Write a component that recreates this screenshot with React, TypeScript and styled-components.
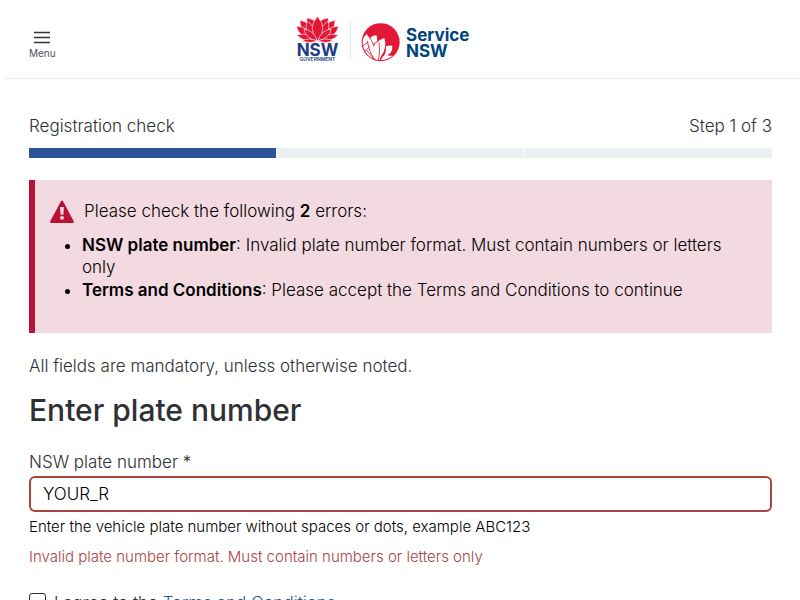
import React, { useState } from "react";
import styled, { createGlobalStyle } from "styled-components";

const GlobalStyle = createGlobalStyle`
  *, *::before, *::after { box-sizing: border-box; }
  html { scrollbar-width: none; }
  body {
    margin: 0;
    background: #fff;
    color: #2e3133;
    font-family: Inter, "Liberation Sans", sans-serif;
    font-size: 17px;
    font-weight: 300;
    line-height: 22px;
  }
`;

const Page = styled.div`
  min-height: 100vh;
`;

const Header = styled.header`
  display: grid;
  grid-template-columns: 1fr auto 1fr;
  align-items: start;
  height: 79px;
  margin-left: 5px;
  padding: 0 64px 0 24px;
  border-bottom: 1px solid #e4e9ec;
`;

const MenuButton = styled.button`
  display: flex;
  flex-direction: column;
  align-items: center;
  justify-self: start;
  gap: 3px;
  margin-top: 31px;
  padding: 0;
  border: 0;
  background: none;
  color: #4f4f5c;
  font: 400 10px/12px Inter, "Liberation Sans", sans-serif;
  cursor: pointer;
`;

const LogoLink = styled.a`
  display: block;
  margin-top: 14px;
`;

const Main = styled.main`
  padding: 36px 28px 24px 29px;
`;

const StepRow = styled.div`
  display: flex;
  justify-content: space-between;
`;

const Progress = styled.div`
  display: grid;
  grid-template-columns: repeat(3, 1fr);
  gap: 1px;
  margin-top: 11px;
`;

const Segment = styled.div<{ $done?: boolean }>`
  height: 10px;
  background: ${(p) => (p.$done ? "#2e5299" : "#ebf0f3")};
`;

const Alert = styled.section`
  display: flex;
  flex-direction: column;
  gap: 10px;
  margin-top: 22px;
  padding: 20px 16px 31px 15px;
  border-left: 6px solid #b81237;
  background: #f3dae0;
  color: #000;
`;

const AlertTitle = styled.div`
  display: flex;
  gap: 10px;
  line-height: 22px;
`;

const ErrorList = styled.ul`
  margin: 0;
  padding-left: 32px;
`;

const ErrorItem = styled.li`
  margin-bottom: 1px;
`;

const Strong = styled.strong`
  font-weight: 600;
`;

const Note = styled.p`
  margin: 22px 0 0;
`;

const Heading = styled.h1`
  margin: 15px 0 0;
  font-size: 30px;
  font-weight: 500;
  line-height: 36px;
`;

const Field = styled.div`
  display: flex;
  flex-direction: column;
  margin-top: 23px;
`;

const Label = styled.label`
  line-height: 22px;
`;

const TextInput = styled.input`
  width: 100%;
  height: 36px;
  margin-top: 3px;
  padding: 0 12px;
  border: 2px solid #a94442;
  border-radius: 6px;
  outline: 0;
  background: #fff;
  color: #000;
  font: 300 17px/22px Inter, "Liberation Sans", sans-serif;
`;

const Help = styled.p<{ $error?: boolean }>`
  margin: ${(p) => (p.$error ? "10px" : "5px")} 0 0;
  color: ${(p) => (p.$error ? "#a94442" : "#000")};
  font-size: 15px;
  line-height: 20px;
`;

const Agree = styled.div`
  display: flex;
  gap: 8px;
  margin-top: 25px;
`;

const Check = styled.input`
  appearance: none;
  flex: none;
  width: 17px;
  height: 17px;
  margin: 1px 0 0;
  border: 1px solid #2e3133;
  border-radius: 3px;
  background: #fff;
  &:checked { background: #2e5299; }
`;

const TermsLink = styled.a`
  color: #2e5299;
  text-decoration: none;
`;

function MenuIcon() {
  return (
    <svg width="16" height="13" viewBox="0 0 16 13" aria-hidden="true">
      <path d="M0 1.500h16M0 6.500h16M0 11.500h16" stroke="#343441" strokeWidth="1.500" />
    </svg>
  );
}

function WarningIcon() {
  return (
    <svg width="24" height="24" viewBox="0 0 24 24" aria-hidden="true">
      <path d="M10.800 1.400Q12 -.6 13.200 1.400L23.600 21Q24.500 23 22.400 23H1.600Q-.5 23 .4 21Z" fill="#b81237" />
      <path d="M10.100 7h3.800l-.5 7.800h-2.800zM10.300 16.300h3.400v3.200h-3.400z" fill="#f3dae0" />
    </svg>
  );
}

function Logo() {
  return (
    <svg width="176" height="50" viewBox="295 14 176 50" role="img" aria-label="NSW Government, Service NSW">
      <defs>
        <clipPath id="disc">
          <circle cx="302" cy="111.500" r="54" />
        </clipPath>
      </defs>
      <g fill="#e31837" stroke="#fff" strokeWidth=".6" strokeLinejoin="round">
        <path d="M311 30Q305 23 307 18Q313 18 317 24zM324 30Q330 23 328 18Q322 18 318 24z" />
        <path d="M314 37Q299 31 300 20Q310 22 316 35zM321 37Q336 31 335 20Q325 22 319 35z" />
        <path d="M315 40Q298 37 296.500 26Q309 27 316 39zM320 40Q337 37 338.500 26Q326 27 319 39z" />
        <path d="M316 40Q303 33 307 21Q316 27 317 40zM319 40Q332 33 328 21Q319 27 318 40z" />
        <path d="M317.500 41Q307 28 317.500 16.500Q328 28 317.500 41z" />
        <path d="M317 41Q305 43 296.500 35Q310 32 317 41zM318 41Q330 43 338.500 35Q325 32 318 41z" />
        <path d="M317 41Q305 38 304 29Q315 31 317 41zM318 41Q330 38 331 29Q320 31 318 41z" />
        <path d="M317 41Q310 44 302 41Q309 37 317 41zM318 41Q325 44 333 41Q326 37 318 41z" />
      </g>
      <g fill="#1b3c83" fontFamily='Inter, "Liberation Sans", sans-serif' textAnchor="middle">
        <text x="317.500" y="55.500" fontSize="17" fontWeight="700">NSW</text>
        <text x="317.500" y="61" fontSize="5" fontWeight="600">GOVERNMENT</text>
      </g>
      <path d="M350.500 20v41" stroke="#e6ebee" />
      <g transform="translate(280 5) scale(.3333)">
        <circle cx="302" cy="111.500" r="57" fill="#e31837" />
        <g fill="#fff" clipPath="url(#disc)">
          <path d="M244 118Q248 96 260 87Q275 105 281 124L292 168Q250 160 244 118z" />
          <path d="M271 98Q280 90 290 91L292 107L281 117z" />
          <path d="M291 168Q276 136 284 117Q296 104 313 99Q322 128 304 152L297 168z" />
          <path d="M318 123Q327 121 337 122Q338 140 326 148L308 160Q319 145 318 123z" />
          <path d="M302 168Q308 152 318 148Q324 154 340 152Q327 168 302 168z" />
        </g>
        <path d="M246 124L265 112M252 142L270 124M262 108Q266 140 284 166M258 134L286 166M297 112Q302 136 295 166" fill="none" stroke="#e31837" strokeWidth="2.500" />
      </g>
      <g fill="#00437f" fontFamily='Inter, "Liberation Sans", sans-serif' fontSize="17" fontWeight="700">
        <text x="406" y="41">Service</text>
        <text x="406" y="57">NSW</text>
      </g>
    </svg>
  );
}

const errors = [
  { field: "NSW plate number", text: "Invalid plate number format. Must contain numbers or letters only" },
  { field: "Terms and Conditions", text: "Please accept the Terms and Conditions to continue" },
];

export default function App() {
  const [plate, setPlate] = useState("YOUR_R");
  return (
    <Page>
      <GlobalStyle />
      <Header>
        <MenuButton type="button">
          <MenuIcon />
          Menu
        </MenuButton>
        <LogoLink href="#home">
          <Logo />
        </LogoLink>
      </Header>
      <Main>
        <StepRow>
          <span>Registration check</span>
          <span>Step 1 of 3</span>
        </StepRow>
        <Progress role="progressbar" aria-label="Progress" aria-valuemin={0} aria-valuemax={3} aria-valuenow={1}>
          <Segment $done />
          <Segment />
          <Segment />
        </Progress>
        <Alert role="alert">
          <AlertTitle>
            <WarningIcon />
            <span>
              Please check the following <Strong>{errors.length}</Strong> errors:
            </span>
          </AlertTitle>
          <ErrorList>
            {errors.map((e) => (
              <ErrorItem key={e.field}>
                <Strong>{e.field}</Strong>: {e.text}
              </ErrorItem>
            ))}
          </ErrorList>
        </Alert>
        <Note>All fields are mandatory, unless otherwise noted.</Note>
        <Heading>Enter plate number</Heading>
        <Field>
          <Label htmlFor="plate">NSW plate number *</Label>
          <TextInput
            id="plate"
            type="text"
            value={plate}
            aria-invalid="true"
            aria-describedby="plate-help plate-error"
            onChange={(e) => setPlate(e.target.value)}
          />
          <Help id="plate-help">Enter the vehicle plate number without spaces or dots, example ABC123</Help>
          <Help id="plate-error" $error>
            Invalid plate number format. Must contain numbers or letters only
          </Help>
        </Field>
        <Agree>
          <Check id="agree" type="checkbox" />
          <Label htmlFor="agree">
            I agree to the <TermsLink href="#terms">Terms and Conditions</TermsLink>
          </Label>
        </Agree>
      </Main>
    </Page>
  );
}
